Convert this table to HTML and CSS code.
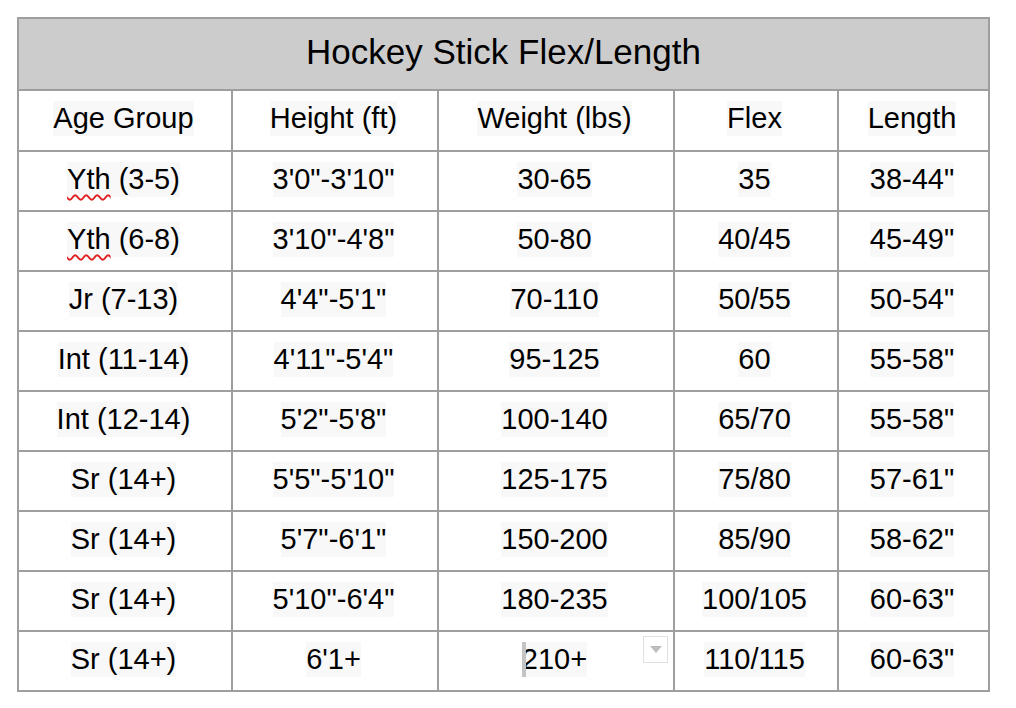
FILE: index.html
```html
<!DOCTYPE html>
<html>
<head>
<meta charset="utf-8">
<link rel="stylesheet" href="styles.css">
</head>
<body>
<div class="table">
  <div class="cell title"><span class="t">Hockey Stick Flex/Length</span></div>

  <div class="cell head"><span class="hl">Age Group</span></div>
  <div class="cell head"><span class="hl">Height (ft)</span></div>
  <div class="cell head"><span class="hl">Weight (lbs)</span></div>
  <div class="cell head"><span class="hl">Flex</span></div>
  <div class="cell head"><span class="hl">Length</span></div>

  <div class="cell"><span class="hl"><span class="spell">Yth</span> (3-5)</span></div>
  <div class="cell"><span class="hl">3'0"-3'10"</span></div>
  <div class="cell"><span class="hl">30-65</span></div>
  <div class="cell"><span class="hl">35</span></div>
  <div class="cell"><span class="hl">38-44"</span></div>

  <div class="cell"><span class="hl"><span class="spell">Yth</span> (6-8)</span></div>
  <div class="cell"><span class="hl">3'10"-4'8"</span></div>
  <div class="cell"><span class="hl">50-80</span></div>
  <div class="cell"><span class="hl">40/45</span></div>
  <div class="cell"><span class="hl">45-49"</span></div>

  <div class="cell"><span class="hl">Jr (7-13)</span></div>
  <div class="cell"><span class="hl">4'4"-5'1"</span></div>
  <div class="cell"><span class="hl">70-110</span></div>
  <div class="cell"><span class="hl">50/55</span></div>
  <div class="cell"><span class="hl">50-54"</span></div>

  <div class="cell"><span class="hl">Int (11-14)</span></div>
  <div class="cell"><span class="hl">4'11"-5'4"</span></div>
  <div class="cell"><span class="hl">95-125</span></div>
  <div class="cell"><span class="hl">60</span></div>
  <div class="cell"><span class="hl">55-58"</span></div>

  <div class="cell"><span class="hl">Int (12-14)</span></div>
  <div class="cell"><span class="hl">5'2"-5'8"</span></div>
  <div class="cell"><span class="hl">100-140</span></div>
  <div class="cell"><span class="hl">65/70</span></div>
  <div class="cell"><span class="hl">55-58"</span></div>

  <div class="cell"><span class="hl">Sr (14+)</span></div>
  <div class="cell"><span class="hl">5'5"-5'10"</span></div>
  <div class="cell"><span class="hl">125-175</span></div>
  <div class="cell"><span class="hl">75/80</span></div>
  <div class="cell"><span class="hl">57-61"</span></div>

  <div class="cell"><span class="hl">Sr (14+)</span></div>
  <div class="cell"><span class="hl">5'7"-6'1"</span></div>
  <div class="cell"><span class="hl">150-200</span></div>
  <div class="cell"><span class="hl">85/90</span></div>
  <div class="cell"><span class="hl">58-62"</span></div>

  <div class="cell"><span class="hl">Sr (14+)</span></div>
  <div class="cell"><span class="hl">5'10"-6'4"</span></div>
  <div class="cell"><span class="hl">180-235</span></div>
  <div class="cell"><span class="hl">100/105</span></div>
  <div class="cell"><span class="hl">60-63"</span></div>

  <div class="cell"><span class="hl">Sr (14+)</span></div>
  <div class="cell"><span class="hl">6'1+</span></div>
  <div class="cell active"><span class="hl cursor">210+</span><span class="dropdown"><svg width="12" height="7" viewBox="0 0 12 7"><path d="M0 0H12L6 7Z" fill="#bdbdbd"/></svg></span></div>
  <div class="cell"><span class="hl">110/115</span></div>
  <div class="cell"><span class="hl">60-63"</span></div>
</div>
</body>
</html>
```

FILE: styles.css
```css
html, body {
  margin: 0;
  padding: 0;
  background: #ffffff;
}

body {
  padding: 17px 0 0 17px;
  font-family: "Liberation Sans", Arial, sans-serif;
  color: #000000;
}

.table {
  display: grid;
  width: 973px;
  box-sizing: border-box;
  padding: 2px;
  gap: 2px;
  background: #9e9e9e;
  grid-template-columns: 212px 204px 234px 162px 149px;
  grid-template-rows: 70px 59px repeat(9, 58px);
}

.cell {
  background: #ffffff;
  display: flex;
  align-items: center;
  justify-content: center;
  font-size: 29px;
  padding: 0 3px 3px 0;
  box-sizing: border-box;
  position: relative;
}

.title {
  grid-column: 1 / -1;
  background: #cccccc;
  font-size: 35px;
  padding: 0 0 5px 0;
}

.head {
  padding-bottom: 4px;
}

.hl {
  background: #f8f8f8;
  padding: 1px 0;
  line-height: 33px;
  position: relative;
  white-space: nowrap;
}

.spell {
  text-decoration: underline wavy #e02020;
  text-decoration-thickness: 1.5px;
  text-underline-offset: 5px;
}

.cursor::before {
  content: "";
  position: absolute;
  left: 0;
  top: 0;
  bottom: 0;
  width: 4px;
  background: #c4c4c4;
}

.dropdown {
  position: absolute;
  left: 204px;
  top: 4px;
  width: 23px;
  height: 25px;
  border: 1px solid #e0e0e0;
  background: #ffffff;
  display: flex;
  align-items: center;
  justify-content: center;
}
```
